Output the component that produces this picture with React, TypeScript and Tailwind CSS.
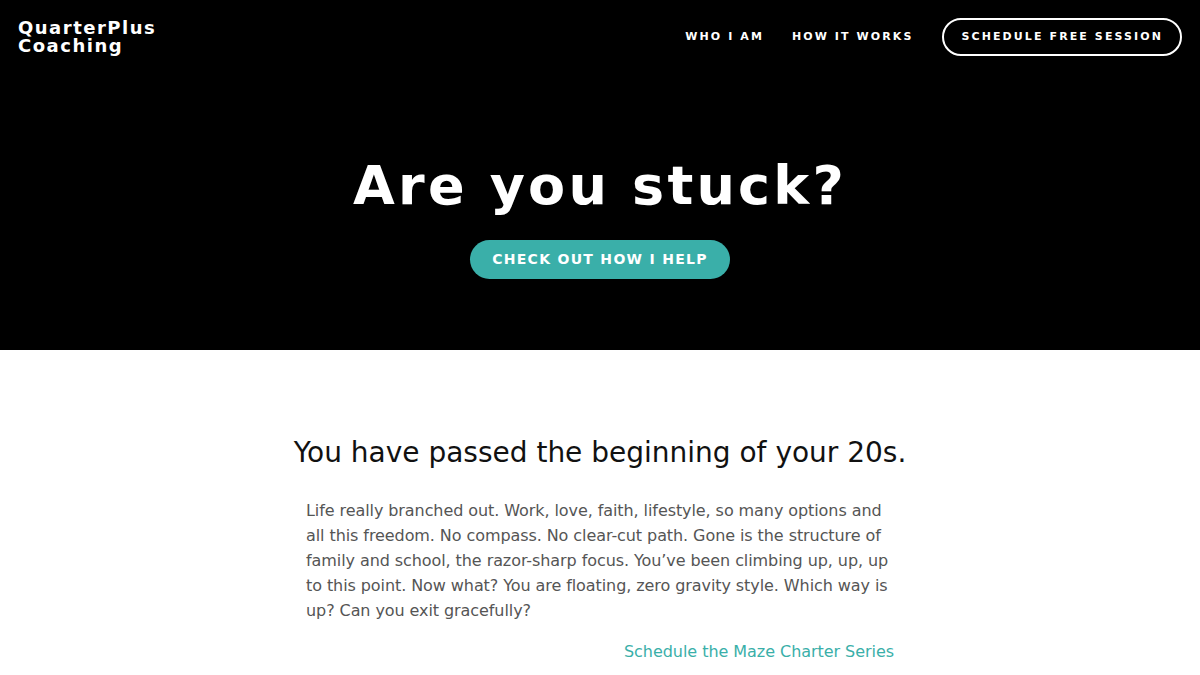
export default function App() {
  const font = { fontFamily: '"DejaVu Sans", sans-serif' };
  return (
    <div className="w-[1200px] h-[675px] overflow-hidden bg-white" style={font}>
      <div className="bg-black h-[350px] flex flex-col">
        <header className="flex items-center justify-between pl-[18px] pr-[18px] pt-[18px]">
          <div className="text-white font-bold text-[18px] leading-[18px] tracking-[1.5px]">
            <div>QuarterPlus</div>
            <div>Coaching</div>
          </div>
          <nav className="flex items-center">
            <a className="text-white font-bold text-[11px] tracking-[2.1px] mr-[28px]">WHO I AM</a>
            <a className="text-white font-bold text-[11px] tracking-[2.1px] mr-[29px]">HOW IT WORKS</a>
            <a className="text-white font-bold text-[11px] tracking-[2.1px] border-2 border-white rounded-full h-[38px] px-[17px] flex items-center">
              SCHEDULE FREE SESSION
            </a>
          </nav>
        </header>
        <div className="flex flex-col items-center mt-[99px]">
          <h1 className="text-white font-bold text-[54px] leading-[62px] tracking-[3.2px]">Are you stuck?</h1>
          <a className="mt-[23px] bg-[#3aafa9] text-white font-bold text-[14px] tracking-[1.3px] rounded-full h-[39px] w-[260px] flex items-center justify-center">
            CHECK OUT HOW I HELP
          </a>
        </div>
      </div>
      <div className="flex flex-col items-center pt-[85px]">
        <h2 className="text-[#111] text-[28px] leading-[36px]">You have passed the beginning of your 20s.</h2>
        <div className="w-[588px] mt-[27px]">
          <p className="text-[#555] text-[16px] leading-[25px] tracking-[-0.08px]">
            Life really branched out. Work, love, faith, lifestyle, so many options and all this freedom. No compass. No clear-cut path. Gone is the structure of family and school, the razor-sharp focus. You’ve been climbing up, up, up to this point. Now what? You are floating, zero gravity style. Which way is up? Can you exit gracefully?
          </p>
          <div className="text-right mt-[16px]">
            <a className="text-[#3aafa9] text-[16px] leading-[25px] tracking-[-0.05px]">Schedule the Maze Charter Series</a>
          </div>
        </div>
      </div>
    </div>
  );
}
